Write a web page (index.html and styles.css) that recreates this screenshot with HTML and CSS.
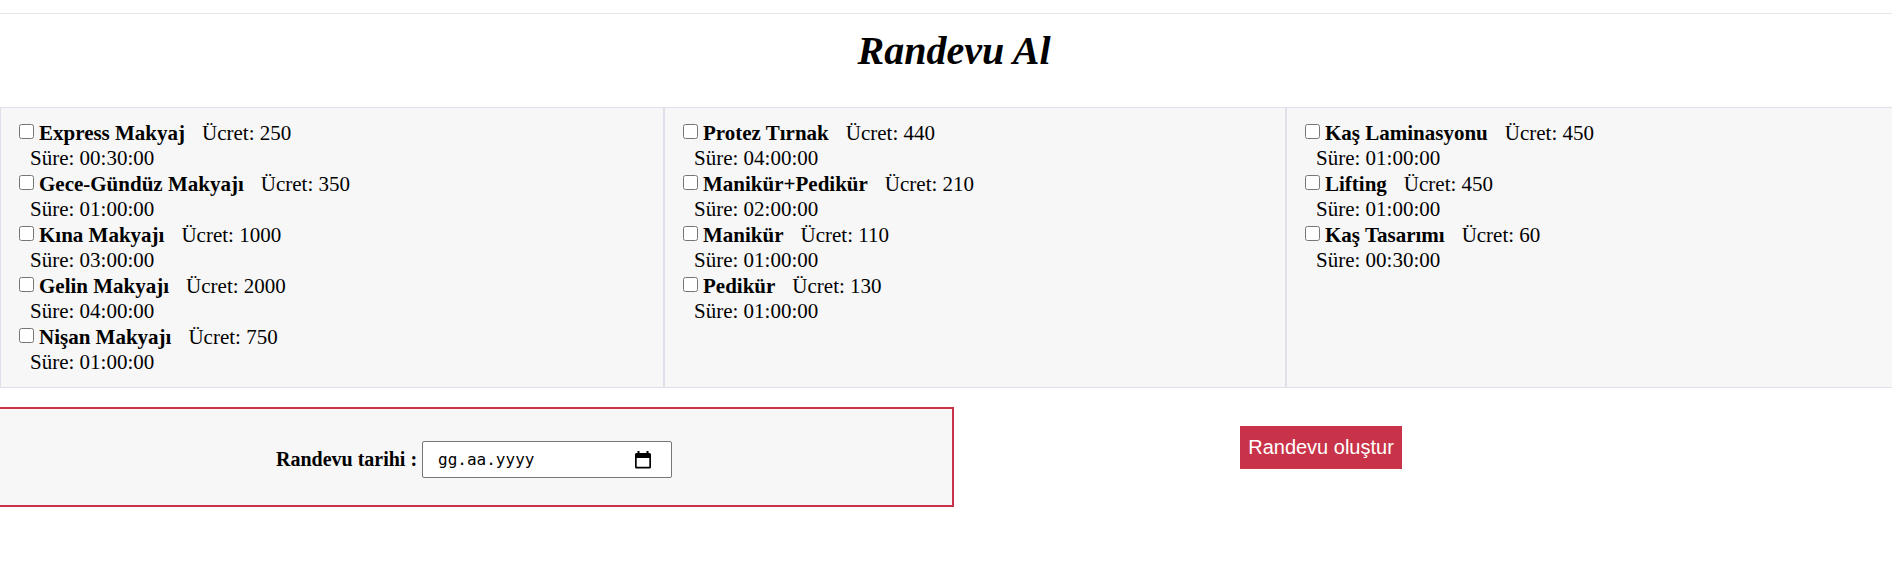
FILE: index.html
```html
<!DOCTYPE html>
<html lang="tr">
<head>
<meta charset="utf-8">
<title>Randevu Al</title>
<link rel="stylesheet" href="styles.css">
</head>
<body>
<main class="page">
  <h1 class="title">Randevu Al</h1>
  <form class="booking">
    <div class="groups">
      <div class="group">
        <div class="service"><div class="head"><input type="checkbox" id="s1"><label for="s1">Express Makyaj</label><span class="price">Ücret: 250</span></div><div class="time">Süre: 00:30:00</div></div>
        <div class="service"><div class="head"><input type="checkbox" id="s2"><label for="s2">Gece-Gündüz Makyajı</label><span class="price">Ücret: 350</span></div><div class="time">Süre: 01:00:00</div></div>
        <div class="service"><div class="head"><input type="checkbox" id="s3"><label for="s3">Kına Makyajı</label><span class="price">Ücret: 1000</span></div><div class="time">Süre: 03:00:00</div></div>
        <div class="service"><div class="head"><input type="checkbox" id="s4"><label for="s4">Gelin Makyajı</label><span class="price">Ücret: 2000</span></div><div class="time">Süre: 04:00:00</div></div>
        <div class="service"><div class="head"><input type="checkbox" id="s5"><label for="s5">Nişan Makyajı</label><span class="price">Ücret: 750</span></div><div class="time">Süre: 01:00:00</div></div>
      </div>
      <div class="group">
        <div class="service"><div class="head"><input type="checkbox" id="s6"><label for="s6">Protez Tırnak</label><span class="price">Ücret: 440</span></div><div class="time">Süre: 04:00:00</div></div>
        <div class="service"><div class="head"><input type="checkbox" id="s7"><label for="s7">Manikür+Pedikür</label><span class="price">Ücret: 210</span></div><div class="time">Süre: 02:00:00</div></div>
        <div class="service"><div class="head"><input type="checkbox" id="s8"><label for="s8">Manikür</label><span class="price">Ücret: 110</span></div><div class="time">Süre: 01:00:00</div></div>
        <div class="service"><div class="head"><input type="checkbox" id="s9"><label for="s9">Pedikür</label><span class="price">Ücret: 130</span></div><div class="time">Süre: 01:00:00</div></div>
      </div>
      <div class="group">
        <div class="service"><div class="head"><input type="checkbox" id="s10"><label for="s10">Kaş Laminasyonu</label><span class="price">Ücret: 450</span></div><div class="time">Süre: 01:00:00</div></div>
        <div class="service"><div class="head"><input type="checkbox" id="s11"><label for="s11">Lifting</label><span class="price">Ücret: 450</span></div><div class="time">Süre: 01:00:00</div></div>
        <div class="service"><div class="head"><input type="checkbox" id="s12"><label for="s12">Kaş Tasarımı</label><span class="price">Ücret: 60</span></div><div class="time">Süre: 00:30:00</div></div>
      </div>
    </div>
    <div class="actions">
      <div class="date-box">
        <label for="date">Randevu tarihi :</label>
        <div class="date-field">
          <input type="text" id="date" placeholder="gg.aa.yyyy">
          <button type="button" class="picker" aria-label="Takvim">
            <svg viewBox="0 0 16 18" width="16" height="18"><path fill="#000" fill-rule="evenodd" d="M2.500 0h2v2h7V0h2v2h1a1.500 1.500 0 0 1 1.500 1.500v12.500a1.500 1.500 0 0 1-1.500 1.500h-13A1.500 1.500 0 0 1 0 16V3.500A1.500 1.500 0 0 1 1.500 2h1zM1.700 7v8.800h12.600V7z"/></svg>
          </button>
        </div>
      </div>
      <div class="submit-cell"><button type="submit" class="submit">Randevu oluştur</button></div>
    </div>
  </form>
</main>
</body>
</html>
```
FILE: styles.css
```css
body {
  margin: 0;
  padding-top: 13px;
  overflow-x: hidden;
  background: #fff;
  color: #000;
  font: 21px/25px "Liberation Serif", "Times New Roman", serif;
}

/* The content runs under the right edge of the window. */
.page {
  margin-right: -16px;
  border-top: 1px solid #e6e6e6;
}

.title {
  margin: 0;
  padding: 13px 0 32px;
  text-align: center;
  font-size: 40px;
  font-style: italic;
  line-height: 48px;
}

.groups {
  display: grid;
  grid-template-columns: 664fr 622fr 622fr;
}

.group {
  padding: 12px 18px;
  border: 1px solid #dee0ec;
  background: #f7f7f7;
}

.head {
  display: flex;
  align-items: flex-start;
  line-height: 26px;
}

.head input {
  width: 15px;
  height: 15px;
  margin: 4px 5px 0 0;
}

.head label {
  font-weight: bold;
}

.price {
  margin-left: 17px;
}

.time {
  padding-left: 11px;
}

.actions {
  display: grid;
  grid-template-columns: 1fr 1fr;
  align-items: start;
  margin-top: 19px;
}

.date-box {
  display: flex;
  align-items: center;
  justify-content: center;
  gap: 5px;
  margin-left: -6px;
  padding: 32px 0 27px;
  border: 2px solid #c83349;
  background: #f7f7f7;
  font-size: 20px;
  font-weight: bold;
}

.date-field {
  display: flex;
  align-items: center;
  box-sizing: border-box;
  width: 250px;
  padding: 0 20px 0 15px;
  border: 1px solid #767676;
  border-radius: 2px;
  background: #fff;
}

.date-field input {
  flex: 1;
  min-width: 0;
  height: 35px;
  padding: 0;
  border: 0;
  background: none;
  outline: none;
  font: 16px/35px "DejaVu Sans Mono", monospace;
}

.date-field input::placeholder {
  color: #000;
}

.picker {
  display: flex;
  padding: 0;
  border: 0;
  background: none;
}

.submit-cell {
  padding: 19px 0 0 30%;
}

.submit {
  padding: 9px 8px;
  border: 0;
  background: #c83349;
  color: #fff;
  font: 20px/25px "Liberation Sans", Arial, sans-serif;
}
```
